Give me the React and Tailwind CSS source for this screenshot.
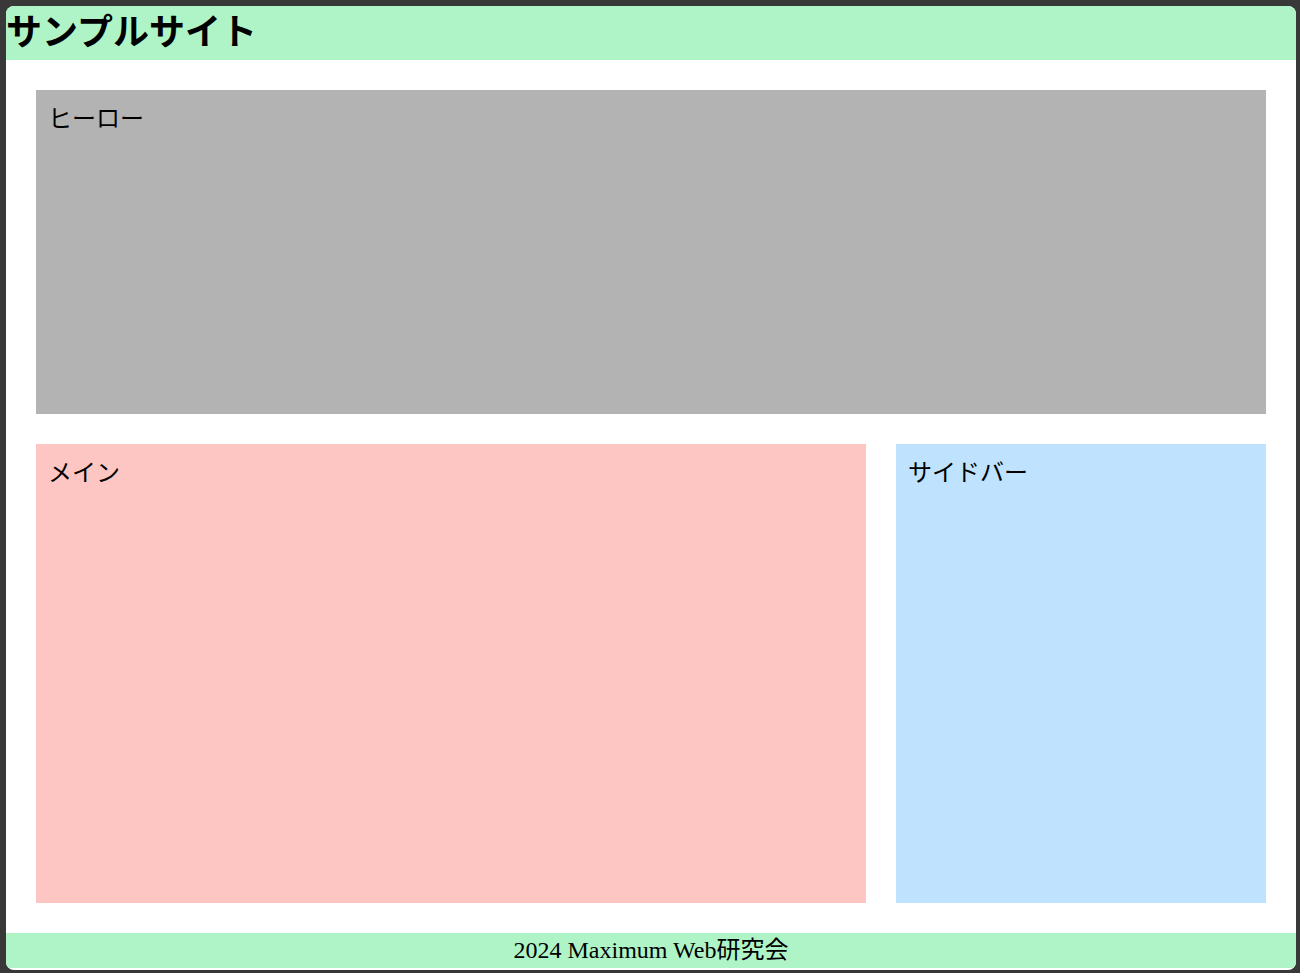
import React from 'react';

const jp = { fontFamily: '"Noto Sans CJK JP", "Noto Sans", sans-serif' };

export default function App() {
  return (
    <div className="min-h-screen bg-[#383838] pt-[6px] pl-[6px] pr-[4px]" style={jp}>
      <div className="h-[964px] bg-white rounded-[8px] overflow-hidden flex flex-col">
        <header className="h-[54px] bg-[#aff4c6] shrink-0">
          <h1 className="m-0 text-[36px] font-bold leading-[46px] text-black">サンプルサイト</h1>
        </header>

        <div className="p-[30px] flex flex-col gap-[30px]">
          <section className="h-[324px] bg-[#b3b3b3] pt-[9px] px-3 text-[24px] leading-[36px] text-black">
            ヒーロー
          </section>
          <div className="h-[459px] flex gap-[30px]">
            <main className="flex-1 bg-[#fec6c2] pt-[9px] px-3 text-[24px] leading-[36px] text-black">
              メイン
            </main>
            <aside className="w-[370px] bg-[#bfe3fe] pt-[9px] px-3 text-[24px] leading-[36px] text-black">
              サイドバー
            </aside>
          </div>
        </div>

        <footer
          className="h-[35px] bg-[#aff4c6] flex items-center justify-center text-[24px] leading-[35px] text-black shrink-0"
          style={{ fontFamily: '"Liberation Serif", "Noto Sans CJK JP", serif' }}
        >
          2024 Maximum Web研究会
        </footer>
      </div>
    </div>
  );
}
